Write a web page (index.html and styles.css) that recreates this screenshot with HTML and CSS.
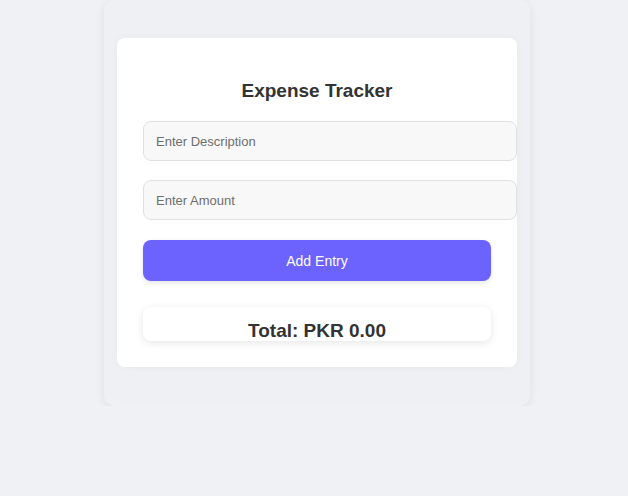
FILE: index.html
```html
<!DOCTYPE html>
<html>
<head>
<meta charset="utf-8">
<link rel="stylesheet" href="styles.css">
</head>
<body>
<div class="outer">
  <div class="card">
    <h2 class="title">Expense Tracker</h2>
    <input class="field" type="text" placeholder="Enter Description">
    <input class="field field-last" type="number" placeholder="Enter Amount">
    <button class="btn">Add Entry</button>
    <div class="total"><h3 class="total-text">Total: PKR 0.00</h3></div>
  </div>
</div>
</body>
</html>
```
FILE: styles.css
```css
html, body {
  margin: 0;
  padding: 0;
}
body {
  background: #f0f1f5;
  font-family: "Liberation Sans", Arial, sans-serif;
  color: #333;
  display: flex;
  justify-content: center;
}
.outer {
  width: 400px;
  margin-left: 6px;
  padding: 38px 13px 39px;
  background: #eff0f4;
  border-radius: 10px;
  box-shadow: 0 2px 10px rgba(0,0,0,0.08);
}
.card {
  background: #fff;
  border-radius: 8px;
  padding: 31px 26px 26px;
  box-shadow: 0 0 10px rgba(0,0,0,0.03);
}
.title {
  margin: 10px 0 19px;
  text-align: center;
  font-size: 19px;
  font-weight: bold;
  color: #333;
  line-height: 23px;
}
.field {
  display: block;
  width: 100%;
  box-sizing: content-box;
  height: 16px;
  padding: 11px 12px;
  margin: 0 0 19px;
  border: 1px solid #e0e0e4;
  border-radius: 8px;
  background: #f8f8f8;
  font-family: "Liberation Sans", Arial, sans-serif;
  font-size: 13px;
  color: #333;
  outline: none;
}
.field-last {
  margin-bottom: 20px;
}
.field::placeholder {
  color: #6e6e6e;
}
.field::-webkit-outer-spin-button,
.field::-webkit-inner-spin-button {
  -webkit-appearance: none;
  margin: 0;
}
.btn {
  display: block;
  width: 100%;
  height: 41px;
  border: none;
  border-radius: 8px;
  background: #6c63ff;
  color: #fff;
  font-family: "Liberation Sans", Arial, sans-serif;
  font-size: 14px;
  box-shadow: 0 2px 5px rgba(0,0,0,0.1);
  margin: 0 0 26px;
}
.total {
  background: #fff;
  border-radius: 8px;
  height: 34px;
  box-shadow: 0 2px 8px rgba(0,0,0,0.1);
  overflow: hidden;
}
.total-text {
  margin: 0;
  padding-top: 12px;
  text-align: center;
  font-size: 19px;
  line-height: 23px;
  font-weight: bold;
  color: #333;
}
```
